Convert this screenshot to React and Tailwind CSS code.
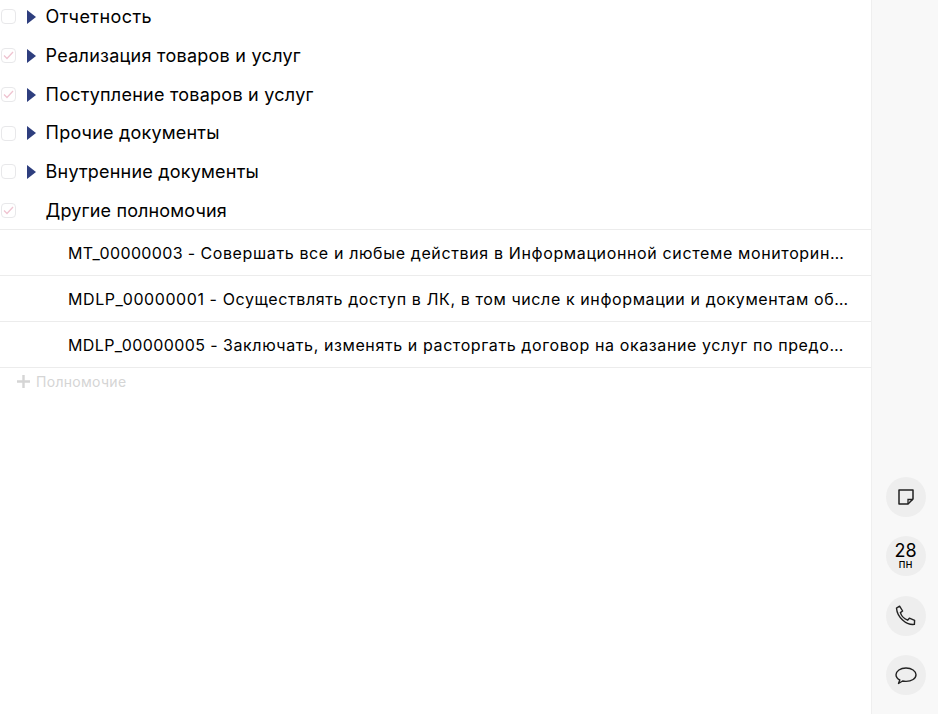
import React from "react";

const rows = [
  { label: "Отчетность", checked: false, arrow: true, cls: "h-[39px] -mt-[3px]", track: "tracking-[0.43px]" },
  { label: "Реализация товаров и услуг", checked: true, arrow: true, cls: "h-[39px]", track: "tracking-[0.26px]" },
  { label: "Поступление товаров и услуг", checked: true, arrow: true, cls: "h-[39px]", track: "tracking-[0.24px]" },
  { label: "Прочие документы", checked: false, arrow: true, cls: "h-[38px]", track: "tracking-[0.2px]" },
  { label: "Внутренние документы", checked: false, arrow: true, cls: "h-[39px]", track: "tracking-[0.2px]" },
  { label: "Другие полномочия", checked: true, arrow: false, cls: "h-[38px] pt-[1px]", track: "tracking-[0.14px]" },
];

const subs = [
  { code: "MT_00000003 - ", text: "Совершать все и любые действия в Информационной системе мониторинга товаров", track: "tracking-[0.36px]", body: "tracking-[0.63px]" },
  { code: "MDLP_00000001 - ", text: "Осуществлять доступ в ЛК, в том числе к информации и документам об организации", track: "tracking-[0.58px]", body: "tracking-[0.6px]" },
  { code: "MDLP_00000005 - ", text: "Заключать, изменять и расторгать договор на оказание услуг по предоставлению", track: "tracking-[0.4px]", body: "tracking-[0.6px]" },
];

function Box({ checked }) {
  return (
    <span className="w-[15px] h-[15px] rounded-[4px] border-[1.5px] border-[#e8e8ea] bg-white flex items-center justify-center shrink-0">
      {checked && (
        <svg width="11" height="9" viewBox="0 0 11 9" fill="none">
          <path d="M1 4.5 L4 7.5 L10 1" stroke="#efc4d1" strokeWidth="1.3" />
        </svg>
      )}
    </span>
  );
}

function Circle({ children }) {
  return (
    <div className="w-10 h-10 rounded-full bg-[#eeeeee] flex flex-col items-center justify-center text-black">
      {children}
    </div>
  );
}

export default function App() {
  return (
    <div className="flex w-[938px] h-[714px] bg-white overflow-hidden font-['Inter',sans-serif] text-black">
      <main className="w-[871px] shrink-0 flex flex-col">
        <div className="flex flex-col">
          {rows.map((r) => (
            <div key={r.label} className={`flex items-center pl-[1px] ${r.cls}`}>
              <Box checked={r.checked} />
              <span className="w-[29.6px] flex justify-center pl-[1px] shrink-0">
                {r.arrow && (
                  <svg width="9" height="14" viewBox="0 0 9 14">
                    <path d="M0 0 L9 7 L0 14 Z" fill="#2e3e7e" />
                  </svg>
                )}
              </span>
              <span className={`text-[18px] leading-6 whitespace-nowrap ${r.track}`}>{r.label}</span>
            </div>
          ))}
        </div>
        <div className="border-t border-[#ececec]">
          {subs.map((s) => (
            <div key={s.code} className="h-[46px] border-b border-[#ececec] flex items-center pl-[68px] pr-[20px] pt-[1px]">
              <div className="text-[16px] leading-6 truncate">
                <span className={s.track}>{s.code}</span>
                <span className={s.body}>{s.text}</span>
              </div>
            </div>
          ))}
        </div>
        <div className="flex items-center pl-[16px] h-[27px] text-[14px] tracking-[0.3px] text-[#d5d5d5]">
          <svg width="15" height="15" viewBox="0 0 15 15" className="mr-[5px]">
            <path d="M7.5 1 V14 M1 7.5 H14" stroke="#d5d5d5" strokeWidth="2.4" />
          </svg>
          Полномочие
        </div>
      </main>
      <aside className="flex-1 bg-[#f8f8f8] border-l border-[#efefef] flex flex-col items-center justify-end gap-[19.6px] pb-[18.6px] pl-[1px]">
        <Circle>
          <svg width="16" height="16" viewBox="0 0 16 16" fill="none">
            <path d="M15 10 V1 H1 V15 H10 L15 10 Z" stroke="#222" strokeWidth="1.5" strokeLinejoin="round" />
            <path d="M10 15 V10.5 H15" stroke="#222" strokeWidth="1.3" />
          </svg>
        </Circle>
        <Circle>
          <span className="text-[18px] leading-[18px] -mt-[1px]">28</span>
          <span className="text-[12px] leading-[10px] -mt-[0.5px]">пн</span>
        </Circle>
        <Circle>
          <svg width="21" height="21" viewBox="0 0 21 21" fill="none">
            <path d="M1.5 3.2 L4.6 1.2 L7.6 6 L5.4 7.6 C6.2 10.4 9 13.6 12.6 15.2 L14.4 13.2 L19.6 15.4 L19.4 19.4 C11 20.4 2.2 12 1.5 3.2 Z" stroke="#222" strokeWidth="1.4" strokeLinejoin="round" />
          </svg>
        </Circle>
        <Circle>
          <svg width="22" height="19" viewBox="0 0 22 19" fill="none">
            <path d="M3.5 17.5 L4.8 14 C2.4 12.8 1 11 1 8.8 C1 5 5.4 2 11 2 C16.6 2 21 5 21 8.8 C21 12.6 16.6 15.4 11 15.4 C9.6 15.4 8.6 15.3 7.6 15 Z" stroke="#222" strokeWidth="1.4" strokeLinejoin="round" />
          </svg>
        </Circle>
      </aside>
    </div>
  );
}
